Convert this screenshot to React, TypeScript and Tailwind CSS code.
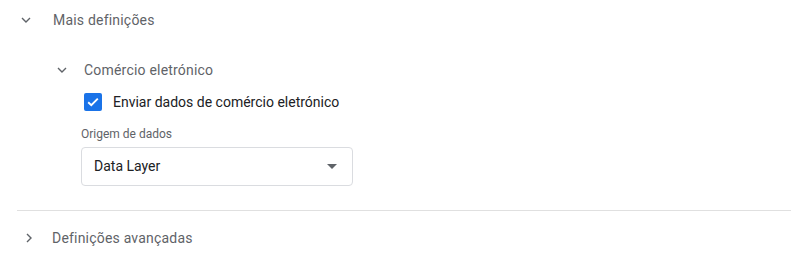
import React from "react";

const ChevronDown = () => (
  <svg width="10" height="6" viewBox="0 0 10 6" fill="none">
    <path d="M1 1L5 5L9 1" stroke="#5f6368" strokeWidth="1.4" />
  </svg>
);

const ChevronRight = () => (
  <svg width="6" height="10" viewBox="0 0 6 10" fill="none">
    <path d="M1 1L5 5L1 9" stroke="#5f6368" strokeWidth="1.4" />
  </svg>
);

export default function App() {
  return (
    <div className="w-[791px] h-[259px] bg-white font-['Roboto',sans-serif] pl-[17px]">
      <div className="h-10 flex items-center">
        <div className="w-[36px] flex pl-[4px]">
          <ChevronDown />
        </div>
        <span className="text-[14px] tracking-[0.2px] text-[#5f6368]">Mais definições</span>
      </div>
      <div className="pl-[36px]">
        <div className="h-[20px] mt-[20px] flex items-center">
          <div className="w-[31px] flex pl-[4px]">
            <ChevronDown />
          </div>
          <span className="text-[14px] tracking-[0.2px] text-[#5f6368]">Comércio eletrónico</span>
        </div>
        <div className="pl-[31px] mt-[12px] h-[20px] flex items-center">
          <div className="w-[18px] h-[18px] rounded-[2px] bg-[#1a73e8] flex items-center justify-center">
            <svg width="12" height="10" viewBox="0 0 12 10" fill="none">
              <path d="M1.2 5.2L4.3 8.2L10.8 1.6" stroke="white" strokeWidth="1.9" />
            </svg>
          </div>
          <span className="ml-[11px] text-[14px] leading-[20px] text-[#202124]">Enviar dados de comércio eletrónico</span>
        </div>
        <div className="pl-[28px]">
          <div className="mt-[14px] text-[12px] leading-[16px] text-[#5f6368]">Origem de dados</div>
          <div className="mt-[5px] w-[272px] h-[39px] border border-[#dadce0] rounded-[4px] flex items-center justify-between pl-[12px] pr-[15px]">
            <span className="text-[14px] text-[#202124]">Data Layer</span>
            <svg width="10" height="5" viewBox="0 0 10 5">
              <path d="M0 0L5 5L10 0Z" fill="#5f6368" />
            </svg>
          </div>
        </div>
      </div>
      <div className="mt-[24px] h-px bg-[#e0e0e0]" />
      <div className="h-[54px] flex items-center">
        <div className="w-[35px] flex pl-[9px]">
          <ChevronRight />
        </div>
        <span className="text-[14px] tracking-[0.2px] text-[#5f6368]">Definições avançadas</span>
      </div>
    </div>
  );
}
